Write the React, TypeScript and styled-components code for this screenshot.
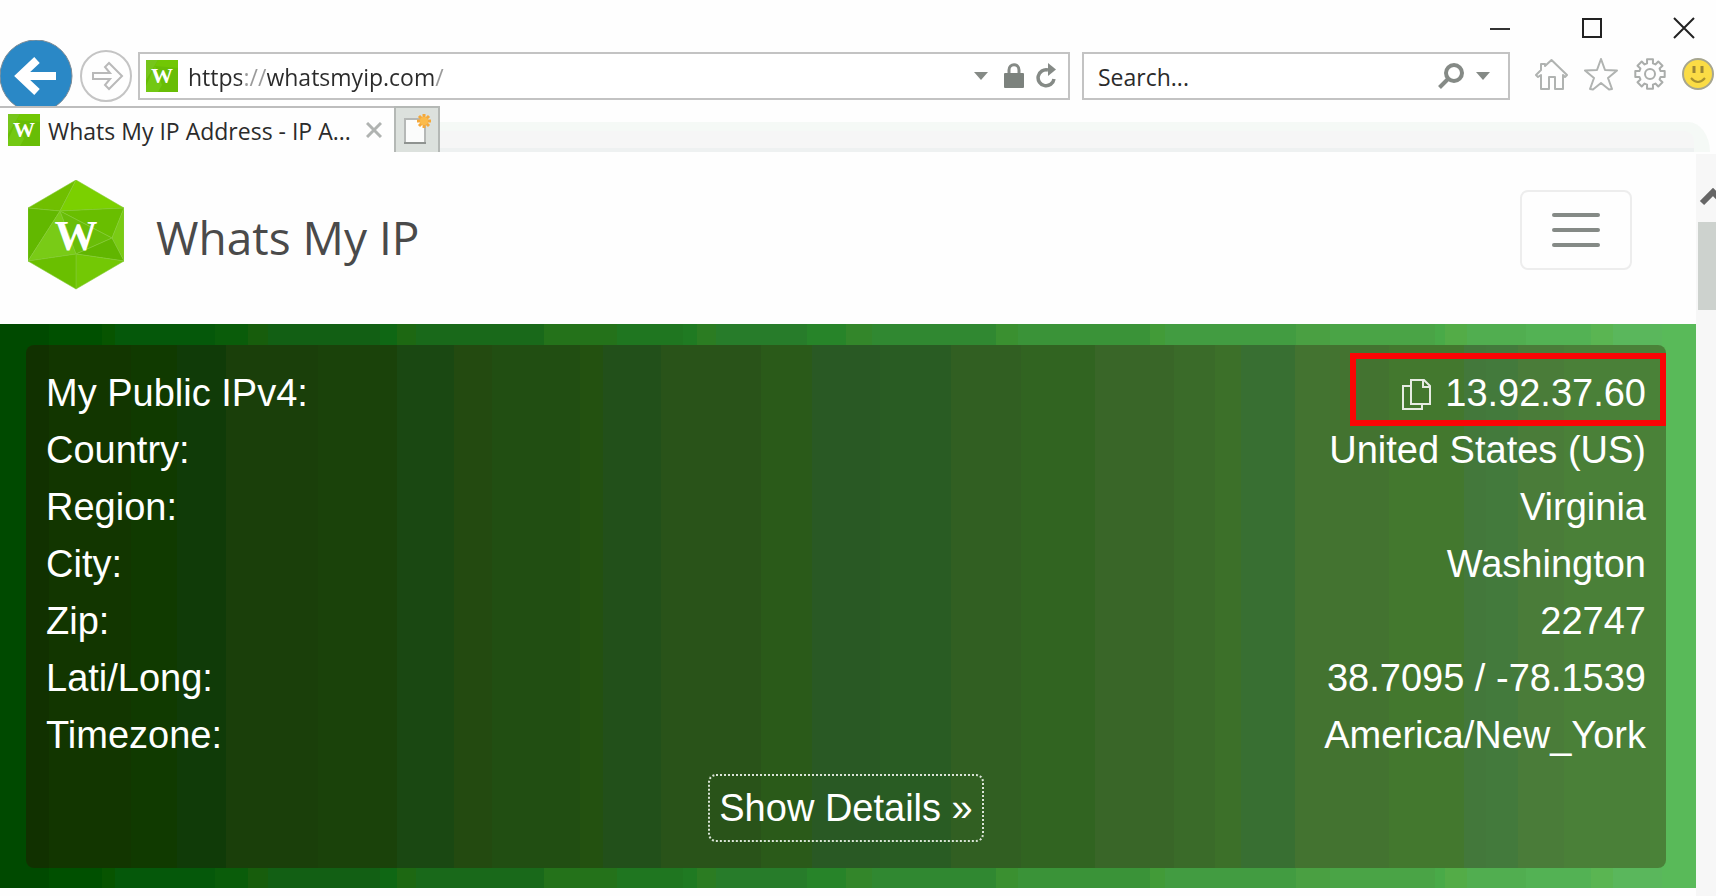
import React from "react";
import styled, { createGlobalStyle } from "styled-components";

type Band = [number, string];

/* Colour steps of the banner, as [start in per mille of the width, colour]. */
const outerBands: Band[] = [
  [0, "#004a00"], [29, "#005000"], [60, "#075400"], [68, "#05580a"], [127, "#0a5c0a"],
  [146, "#175d0c"], [158, "#125f14"], [224, "#0f6714"], [234, "#1d6812"], [245, "#19691a"],
  [321, "#24721a"], [364, "#1f7620"], [403, "#1f7a22"], [411, "#2b7c22"], [422, "#277c2a"],
  [476, "#278429"], [499, "#33862a"], [514, "#308831"], [587, "#3a9030"], [600, "#3a9338"],
  [678, "#429b38"], [687, "#429c41"], [764, "#4aa042"], [784, "#4aa446"], [846, "#49aa48"],
  [852, "#53ac47"], [865, "#51ae50"], [900, "#53b254"], [938, "#5ab552"], [951, "#5ab75c"],
  [980, "#59ba59"],
];

const innerBands: Band[] = [
  [0, "#113100"], [14, "#123600"], [64, "#103a00"], [92, "#103b08"], [122, "#1a3f0a"],
  [178, "#1a420a"], [226, "#1a4812"], [261, "#234a10"], [284, "#214e12"], [338, "#235110"],
  [352, "#22501a"], [387, "#295319"], [448, "#2a5a19"], [479, "#295924"], [521, "#295c23"],
  [564, "#315f22"], [607, "#316421"], [652, "#396628"], [700, "#3a6b29"], [725, "#3c7029"],
  [741, "#386f32"], [774, "#437330"], [831, "#43782e"], [877, "#43783b"], [890, "#437a3c"],
  [910, "#4a7c39"], [938, "#4a8038"], [990, "#4a8238"],
];

const banded = (bands: Band[]) =>
  `linear-gradient(to right, ${bands
    .map(([at, color], i) => {
      const end = i + 1 < bands.length ? bands[i + 1][0] : 1000;
      return `${color} ${at / 10}% ${end / 10}%`;
    })
    .join(", ")})`;

const GlobalStyle = createGlobalStyle`
  * { box-sizing: border-box; }
  body {
    margin: 0;
    background: #fefefe;
    overflow: hidden;
    font-family: "Open Sans", "Noto Sans", sans-serif;
  }
  button { font: inherit; color: inherit; border: 0; padding: 0; background: none; cursor: pointer; }
  svg { display: block; }
`;

const BrowserWindow = styled.div`
  display: flex;
  flex-direction: column;
  min-height: 100vh;
`;

const TitleBar = styled.header`
  display: flex;
  justify-content: flex-end;
  align-items: flex-end;
  gap: 70px;
  height: 40px;
  padding-right: 21px;
`;

const WindowButton = styled.button`
  width: 22px;
  height: 24px;
`;

const NavBar = styled.nav`
  display: flex;
  align-items: center;
  height: 66px;
  padding-right: 2px;
  overflow: hidden;
`;

const BackButton = styled.button`
  flex: none;
  align-self: flex-start;
  width: 73px;
  height: 66px;
  overflow: hidden;
`;

const ForwardButton = styled.button`
  flex: none;
  width: 52px;
  height: 52px;
  margin: 6px 6px 0 7px;
`;

const Field = styled.div<{ $grow: number }>`
  flex: ${(p) => p.$grow} 1 0;
  min-width: 0;
  display: flex;
  align-items: center;
  height: 48px;
  margin-top: 6px;
  border: 2px solid #c3c3c3;
  background: #ffffff;
`;

const AddressField = styled(Field)`
  padding: 0 12px 0 6px;
  margin-right: 12px;
`;

const SearchField = styled(Field)`
  padding: 0 18px 0 14px;
`;

const TextInput = styled.input`
  flex: 1;
  min-width: 0;
  height: 34px;
  padding: 2px 0 0;
  border: 0;
  outline: 0;
  background: none;
  color: #2b2b2b;
  font: 23px/32px "Open Sans", "Noto Sans", sans-serif;
  &::placeholder { color: #2b2b2b; opacity: 1; }
`;

/* The host stays dark while the scheme separator and the path are greyed. */
const AddressInput = styled(TextInput)`
  margin-left: 10px;
  background: linear-gradient(to right, #2b2b2b 54px, #9a9a9a 54px 79px, #2b2b2b 79px 246px, #9a9a9a 246px);
  background-clip: text;
  -webkit-background-clip: text;
  -webkit-text-fill-color: transparent;
`;

const IconButton = styled.button<{ $gap?: number }>`
  flex: none;
  margin-left: ${(p) => p.$gap ?? 0}px;
`;

const Toolbar = styled.div`
  display: flex;
  align-items: center;
  gap: 16px;
  margin: 2px 0 0 25px;
`;

const TabStrip = styled.div`
  display: flex;
  height: 46px;
`;

const Tab = styled.div`
  display: flex;
  align-items: center;
  width: 394px;
  padding-left: 8px;
  border-top: 2px solid #bdbdbd;
  color: #2b2b2b;
  font-size: 23px;
  line-height: 30px;
  white-space: nowrap;
`;

const TabTitle = styled.span`
  flex: 1;
  margin-left: 8px;
  padding-top: 2px;
`;

const CloseTab = styled.button`
  margin-right: 12px;
`;

const NewTab = styled.button`
  display: flex;
  width: 46px;
  padding: 4px 0 0 6px;
  border: 2px solid #b4b8b5;
  border-bottom: 0;
  background: #dce1dd;
`;

const StripFill = styled.div`
  flex: 1;
  align-self: flex-end;
  height: 30px;
  margin-right: 6px;
  padding-top: 9px;
  padding-right: 16px;
  border-top-right-radius: 22px 30px;
  background: #f5f9f6;
`;

const StripInner = styled.div`
  height: 21px;
  border-bottom: 4px solid #eef1f1;
  border-top-right-radius: 10px;
  background: #f6f6f6;
`;

const Viewport = styled.div`
  flex: 1;
  display: flex;
`;

const Page = styled.div`
  flex: 1;
  min-width: 0;
`;

const ScrollBar = styled.aside`
  flex: none;
  width: 20px;
  margin-top: 2px;
  padding-top: 34px;
  padding-left: 2px;
  background: #f7f7f7;
  overflow: hidden;
`;

const ScrollThumb = styled.div`
  height: 88px;
  margin-top: 16px;
  background: #cdd2ce;
`;

const SiteHeader = styled.header`
  display: flex;
  align-items: center;
  justify-content: space-between;
  height: 172px;
  padding: 0 64px 6px 28px;
`;

const Brand = styled.a`
  display: flex;
  align-items: center;
  gap: 32px;
  color: #4a4a4a;
  font-size: 46px;
  line-height: 60px;
  text-decoration: none;
`;

const BrandName = styled.span`
  padding-top: 4px;
`;

const MenuButton = styled.button`
  display: flex;
  flex-direction: column;
  align-items: center;
  justify-content: center;
  gap: 11px;
  width: 112px;
  height: 80px;
  margin-bottom: 10px;
  border: 2px solid #ededed;
  border-radius: 8px;
`;

const MenuLine = styled.span`
  width: 48px;
  height: 4px;
  border-radius: 2px;
  background: #858a86;
`;

const Banner = styled.main`
  padding: 21px 30px 20px 26px;
  background: ${banded(outerBands)};
`;

const Panel = styled.section`
  padding: 20px 20px 26px;
  border-radius: 8px;
  background: ${banded(innerBands)};
  color: #ffffff;
  font: 38px/57px "Liberation Sans", Arial, sans-serif;
  text-align: center;
`;

const Details = styled.dl`
  margin: 0 0 10px;
`;

const DetailRow = styled.div`
  display: flex;
  justify-content: space-between;
`;

const Term = styled.dt`
  margin: 0;
`;

const Value = styled.dd`
  position: relative;
  display: flex;
  align-items: center;
  gap: 14px;
  margin: 0;
`;

const Highlight = styled.span`
  position: absolute;
  inset: -12px -20px -4px -52px;
  border: 6px solid #fa0505;
  pointer-events: none;
`;

const DetailsButton = styled.button`
  display: block;
  height: 68px;
  margin: 0 auto;
  padding: 0 9px;
  border: 2px dotted #dbe5d8;
  border-radius: 8px;
`;

const Favicon = () => (
  <svg width="32" height="32" viewBox="0 0 32 32" aria-hidden="true">
    <path d="M0 0H32V32H0Z" fill="#68bd06" />
    <path d="M0 0H12L0 20Z" fill="#76c51b" />
    <path d="M12 0H32V8L9 6Z" fill="#71c704" />
    <path d="M9 6L0 26V32H12L16 25Z" fill="#73c813" />
    <text x="16" y="23" textAnchor="middle" fontFamily="Liberation Serif, serif" fontWeight="700" fontSize="22" fill="#fff">W</text>
  </svg>
);

const Logo = () => (
  <svg width="96" height="110" viewBox="0 0 96 110" aria-hidden="true">
    <g stroke="#84cb35" strokeWidth="0.6" strokeLinejoin="round">
      <path d="M0 28L48 0L32 31Z" fill="#70bf00" />
      <path d="M48 0L96 28L32 31Z" fill="#7bd000" />
      <path d="M0 28L32 31L0 81Z" fill="#62b800" />
      <path d="M32 31L48 74L0 81Z" fill="#79cb16" />
      <path d="M32 31L96 28L84 58Z" fill="#69be00" />
      <path d="M32 31L84 58L48 74Z" fill="#69bd08" />
      <path d="M96 28V81L84 58Z" fill="#7acb14" />
      <path d="M84 58L96 81L48 74Z" fill="#61b600" />
      <path d="M48 74L96 81L48 109Z" fill="#73c805" />
      <path d="M0 81L48 74V109Z" fill="#6abf00" />
    </g>
    <text x="48" y="70" textAnchor="middle" fontFamily="Liberation Serif, serif" fontWeight="700" fontSize="43" fill="#fff">W</text>
  </svg>
);

const Caret = () => (
  <svg width="14" height="8" viewBox="0 0 14 8" aria-hidden="true">
    <path d="M0 0H14L7 8Z" fill="#858a86" />
  </svg>
);

/* Outline of an eight-toothed cog centred on (16, 16). */
const cogPath = (() => {
  const points: string[] = [];
  for (let i = 0; i < 8; i++) {
    const base = (i * Math.PI) / 4;
    const corners: [number, number][] = [[-0.27, 11], [-0.2, 15], [0.2, 15], [0.27, 11]];
    corners.forEach(([offset, radius]) => {
      const x = 16 + radius * Math.sin(base + offset);
      const y = 16 - radius * Math.cos(base + offset);
      points.push(`${x.toFixed(2)} ${y.toFixed(2)}`);
    });
  }
  return `M${points.join("L")}Z`;
})();

const details: { term: string; value: string; copy?: boolean }[] = [
  { term: "My Public IPv4:", value: "13.92.37.60", copy: true },
  { term: "Country:", value: "United States (US)" },
  { term: "Region:", value: "Virginia" },
  { term: "City:", value: "Washington" },
  { term: "Zip:", value: "22747" },
  { term: "Lati/Long:", value: "38.7095 / -78.1539" },
  { term: "Timezone:", value: "America/New_York" },
];

export default function App() {
  return (
    <BrowserWindow>
      <GlobalStyle />
      <TitleBar>
        <WindowButton aria-label="Minimize">
          <svg width="22" height="22" viewBox="0 0 22 22"><path d="M1 12H21" stroke="#333" strokeWidth="2" /></svg>
        </WindowButton>
        <WindowButton aria-label="Maximize">
          <svg width="22" height="22" viewBox="0 0 22 22"><path d="M2 2H20V20H2Z" fill="none" stroke="#222" strokeWidth="2" /></svg>
        </WindowButton>
        <WindowButton aria-label="Close">
          <svg width="22" height="22" viewBox="0 0 22 22"><path d="M1 1L21 21M21 1L1 21" stroke="#222" strokeWidth="2" /></svg>
        </WindowButton>
      </TitleBar>

      <NavBar>
        <BackButton aria-label="Back">
          <svg width="73" height="73" viewBox="0 0 73 73">
            <circle cx="36" cy="36" r="36" fill="#2a88c6" stroke="#7d8b95" strokeWidth="1" />
            <path d="M56 36H20M37 20L20 36L37 52" fill="none" stroke="#fff" strokeWidth="8" />
          </svg>
        </BackButton>
        <ForwardButton aria-label="Forward">
          <svg width="52" height="52" viewBox="0 0 52 52">
            <circle cx="26" cy="26" r="25" fill="none" stroke="#c4c4c4" strokeWidth="2" />
            <path d="M13 23H30L25 17L29 13L42 26L29 39L25 35L30 29H13Z" fill="none" stroke="#b9b9b9" strokeWidth="2" />
          </svg>
        </ForwardButton>
        <AddressField $grow={910}>
          <Favicon />
          <AddressInput aria-label="Address" defaultValue="https://whatsmyip.com/" />
          <IconButton aria-label="Show address list"><Caret /></IconButton>
          <IconButton aria-label="Security report" $gap={16}>
            <svg width="20" height="26" viewBox="0 0 20 26">
              <path d="M5 12V7C5 0 15 0 15 7V12" fill="none" stroke="#858a86" strokeWidth="3" />
              <rect x="0" y="10" width="20" height="15" rx="1" fill="#7c827d" />
            </svg>
          </IconButton>
          <IconButton aria-label="Refresh" $gap={12}>
            <svg width="20" height="26" viewBox="0 0 20 26">
              <path d="M12 7A8 8 0 1 0 18 16" fill="none" stroke="#858a86" strokeWidth="3.500" />
              <path d="M12 0L20 6.500L12 13Z" fill="#858a86" />
            </svg>
          </IconButton>
        </AddressField>
        <SearchField $grow={392}>
          <TextInput aria-label="Search" placeholder="Search..." />
          <IconButton aria-label="Run search">
            <svg width="26" height="26" viewBox="0 0 26 26">
              <circle cx="16" cy="10" r="8" fill="none" stroke="#858a86" strokeWidth="4" />
              <path d="M10 16L1.500 24.500" stroke="#858a86" strokeWidth="4" />
            </svg>
          </IconButton>
          <IconButton aria-label="Search options" $gap={12}><Caret /></IconButton>
        </SearchField>
        <Toolbar>
          <IconButton aria-label="Home">
            <svg width="33" height="33" viewBox="0 0 33 33" fill="none" stroke="#b0b3b1" strokeWidth="2" strokeLinejoin="round">
              <path d="M1 17L6 12V6H10V8L16.500 2L32 17L30 19L28 17V31H20V19H14V31H6V17L3 19Z" />
            </svg>
          </IconButton>
          <IconButton aria-label="Favorites">
            <svg width="34" height="33" viewBox="0 0 34 33" fill="none" stroke="#b0b3b1" strokeWidth="2" strokeLinejoin="round">
              <path d="M17 1L21 12L33 12.500L24 20L28 31L25 31.500L17 25L9 31.500L6 31L10 20L1 12.500L13 12Z" />
            </svg>
          </IconButton>
          <IconButton aria-label="Tools">
            <svg width="32" height="32" viewBox="0 0 32 32" fill="none" stroke="#aaadab" strokeWidth="2" strokeLinejoin="round">
              <path d={cogPath} />
              <circle cx="16" cy="16" r="5" />
            </svg>
          </IconButton>
          <IconButton aria-label="Send a smile">
            <svg width="32" height="32" viewBox="0 0 32 32">
              <circle cx="16" cy="16" r="15" fill="#fbdc45" stroke="#a7a68f" strokeWidth="2" />
              <path d="M12 8V15M20 8V15" stroke="#9b8635" strokeWidth="3" />
              <path d="M9 20Q16 28 23 20" fill="none" stroke="#a8912f" strokeWidth="2" />
            </svg>
          </IconButton>
        </Toolbar>
      </NavBar>

      <TabStrip>
        <Tab>
          <Favicon />
          <TabTitle>Whats My IP Address - IP A...</TabTitle>
          <CloseTab aria-label="Close tab">
            <svg width="16" height="16" viewBox="0 0 16 16"><path d="M1 1L15 15M15 1L1 15" stroke="#b0b3b1" strokeWidth="3" /></svg>
          </CloseTab>
        </Tab>
        <NewTab aria-label="New tab">
          <svg width="34" height="34" viewBox="0 0 34 34">
            <path d="M3 7H23V31H3Z" fill="#fbfcfb" stroke="#b5b8b6" strokeWidth="2" />
            <path d="M2 31H24" stroke="#8f9390" strokeWidth="2" />
            <path d="M22 2V16M15 9H29M17 4L27 14M27 4L17 14" stroke="#f5a93a" strokeWidth="3" />
            <circle cx="22" cy="9" r="4" fill="#fbbb4c" />
          </svg>
        </NewTab>
        <StripFill><StripInner /></StripFill>
      </TabStrip>

      <Viewport>
        <Page>
          <SiteHeader>
            <Brand href="#"><Logo /><BrandName>Whats My IP</BrandName></Brand>
            <MenuButton aria-label="Toggle navigation">
              <MenuLine /><MenuLine /><MenuLine />
            </MenuButton>
          </SiteHeader>
          <Banner>
            <Panel>
              <Details>
                {details.map((d) => (
                  <DetailRow key={d.term}>
                    <Term>{d.term}</Term>
                    <Value>
                      {d.copy && (
                        <IconButton aria-label="Copy address">
                          <svg width="29" height="32" viewBox="0 0 29 32" fill="none" stroke="#e6ece2" strokeWidth="2">
                            <path d="M9 2H22L28 8V26H9ZM21 2V9H28" />
                            <path d="M9 8H1V31H20V26" />
                          </svg>
                        </IconButton>
                      )}
                      {d.value}
                      {d.copy && <Highlight />}
                    </Value>
                  </DetailRow>
                ))}
              </Details>
              <DetailsButton>Show Details »</DetailsButton>
            </Panel>
          </Banner>
        </Page>
        <ScrollBar aria-label="Scroll bar">
          <svg width="30" height="18" viewBox="0 0 30 18">
            <path d="M4 15L15 4L26 15" fill="none" stroke="#666" strokeWidth="6" />
          </svg>
          <ScrollThumb />
        </ScrollBar>
      </Viewport>
    </BrowserWindow>
  );
}
